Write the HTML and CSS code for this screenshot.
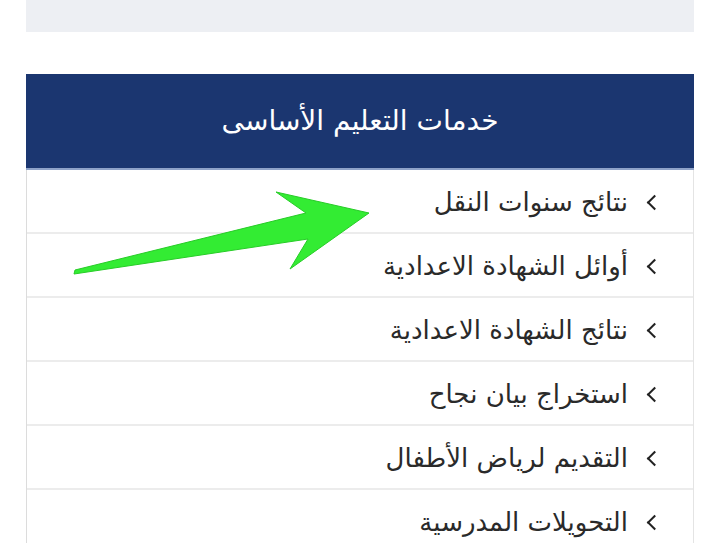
FILE: index.html
```html
<!DOCTYPE html>
<html lang="ar">
<head>
<meta charset="utf-8">
<link rel="stylesheet" href="styles.css">
</head>
<body>
<div class="page">
  <div class="topbox"></div>
  <div class="card">
    <div class="card-head">خدمات التعليم الأساسى</div>
    <ul class="list">
      <li class="row"><span class="chev"></span><span class="label">نتائج سنوات النقل</span></li>
      <li class="row"><span class="chev"></span><span class="label">أوائل الشهادة الاعدادية</span></li>
      <li class="row"><span class="chev"></span><span class="label">نتائج الشهادة الاعدادية</span></li>
      <li class="row"><span class="chev"></span><span class="label">استخراج بيان نجاح</span></li>
      <li class="row"><span class="chev"></span><span class="label">التقديم لرياض الأطفال</span></li>
      <li class="row"><span class="chev"></span><span class="label">التحويلات المدرسية</span></li>
    </ul>
  </div>
  <svg class="arrow" width="720" height="543" viewBox="0 0 720 543">
    <polygon points="74,274 308,239 290,269 369,213 276,192 306,213 75,270" fill="#33ec33" stroke="#27cc27" stroke-width="1" stroke-linejoin="round"/>
  </svg>
</div>
</body>
</html>
```
FILE: styles.css
```css
html, body {
  margin: 0;
  padding: 0;
  background: #ffffff;
}
.page {
  position: relative;
  width: 720px;
  height: 543px;
  overflow: hidden;
  padding: 0 26px;
  box-sizing: border-box;
  font-family: "DejaVu Sans", "Noto Sans", sans-serif;
}
.topbox {
  height: 32px;
  background: #edeff3;
}
.card {
  margin-top: 42px;
  border-left: 1px solid #dcdcdc;
  border-right: 1px solid #e4e4e4;
}
.card-head {
  height: 96px;
  margin: 0 -1px;
  background: #1b3670;
  border-bottom: 2px solid #8ea2c8;
  color: #ffffff;
  font-size: 28px;
  padding-bottom: 2px;
  box-sizing: border-box;
  display: flex;
  align-items: center;
  justify-content: center;
  direction: rtl;
}
.list {
  list-style: none;
  margin: 0;
  padding: 0;
}
.row {
  height: 64px;
  box-sizing: border-box;
  border-bottom: 2px solid #ececec;
  display: flex;
  align-items: center;
  direction: rtl;
  padding-right: 33px;
  padding-top: 2px;
  gap: 21px;
  color: #2a2a2a;
  font-size: 26px;
}
.chev {
  width: 9px;
  height: 9px;
  border-left: 2px solid #222;
  border-bottom: 2px solid #222;
  transform: rotate(45deg);
  flex: none;
}
.arrow {
  position: absolute;
  left: 0;
  top: 0;
  pointer-events: none;
}
```
